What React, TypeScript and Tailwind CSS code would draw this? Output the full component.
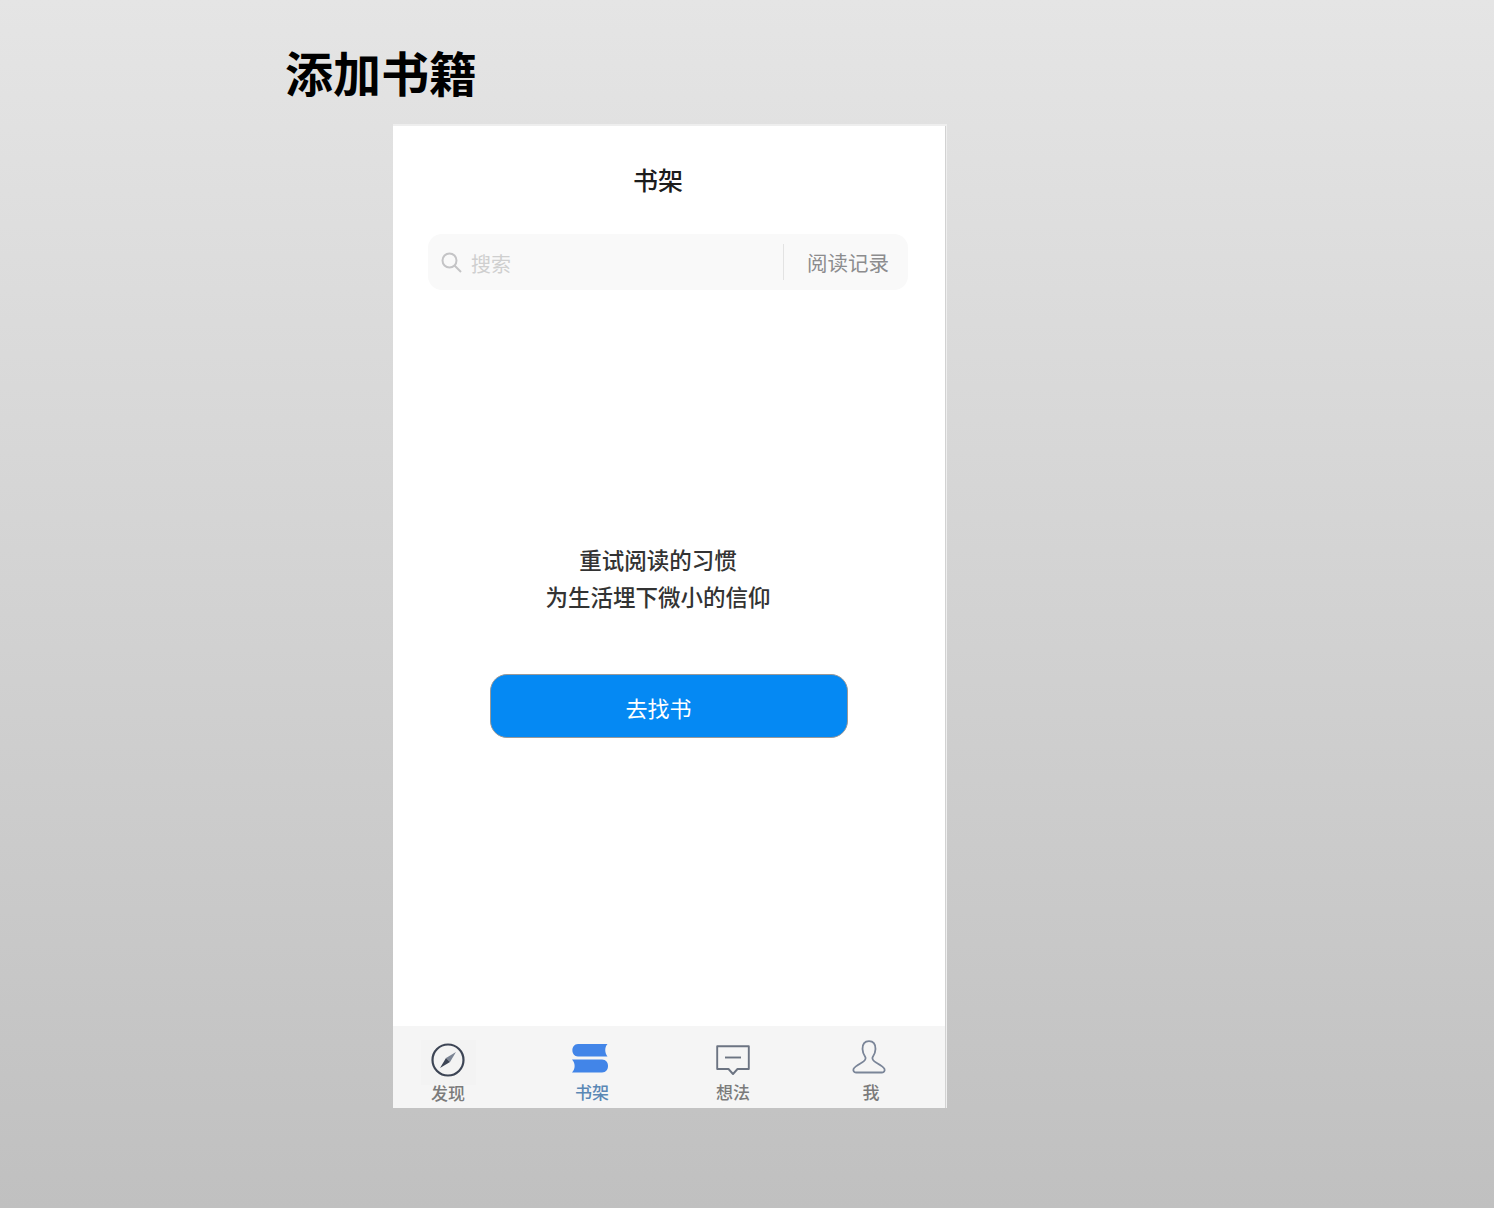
const cjk = "font-['Noto_Sans_CJK_SC','Noto_Sans',sans-serif]";

function CompassIcon() {
  return (
    <svg width="36" height="36" viewBox="0 0 36 36" fill="none">
      <circle cx="18" cy="18" r="15.5" stroke="#3d4555" strokeWidth="2.2" />
      <path d="M26 10 L20 20 L16 16 Z" fill="#7b8494" />
      <path d="M10 26 L16 16 L20 20 Z" fill="#3d4555" />
    </svg>
  );
}

function ShelfIcon() {
  return (
    <svg width="36" height="29" viewBox="0 0 36 29" fill="none">
      <path d="M6 0 H35.5 C32.5 3 32.5 9 35.5 12.5 H6 C-1.5 12.5 -1.5 0 6 0 Z" fill="#4285e8" />
      <path d="M0 15.5 H30 C38 15.5 38 28.5 30 28.5 H0 C3.5 25 3.5 19 0 15.5 Z" fill="#4285e8" />
    </svg>
  );
}

function CommentIcon() {
  return (
    <svg width="34" height="31" viewBox="0 0 34 31" fill="none">
      <path d="M1.2 1.2 H32.8 V24 H21.5 L17 29 L12.5 24 H1.2 Z" stroke="#6c7482" strokeWidth="1.9" strokeLinejoin="round" />
      <path d="M9 12.5 H25" stroke="#6c7482" strokeWidth="1.9" />
    </svg>
  );
}

function PersonIcon() {
  return (
    <svg width="34" height="34" viewBox="0 0 34 34" fill="none">
      <path
        d="M17 1.2 C12.5 1.2 10.5 4.5 10.5 9 C10.5 13 12.5 16 13.5 17.5 C14 19.5 12.5 21 10 22.5 C6.5 24.5 2.5 26.5 1.5 29 C1 31 2 32.5 4 32.5 H30 C32 32.5 33 31 32.5 29 C31.5 26.5 27.5 24.5 24 22.5 C21.5 21 20 19.5 20.5 17.5 C21.5 16 23.5 13 23.5 9 C23.5 4.5 21.5 1.2 17 1.2 Z"
        stroke="#7a8598"
        strokeWidth="1.8"
      />
    </svg>
  );
}

export default function App() {
  return (
    <div className={`w-[1494px] h-[1208px] overflow-hidden bg-gradient-to-b from-[#e5e5e5] to-[#c0c0c0] ${cjk}`}>
      <h1 className="pl-[285px] pt-[36px] h-[124px] text-[48px] leading-[70px] font-semibold text-black">添加书籍</h1>

      {/* Phone */}
      <div className="ml-[393px] w-[554px] h-[984px] bg-white border-t-2 border-r border-[#eeeeee]">
        <div className="h-full flex flex-col border-r border-[#d2d2d2]">
          <div className="pt-[33px] h-[108px] text-center text-[25px] leading-[40px] font-medium text-[#1c1c1c] pr-[22px]">书架</div>

          <div className="mx-[35px] w-[480px] h-[56px] flex items-center rounded-[14px] bg-[#f9f9f9]">
            <svg className="ml-[13px]" width="21" height="21" viewBox="0 0 21 21" fill="none">
              <circle cx="8.5" cy="8.5" r="7" stroke="#c4c4c6" strokeWidth="2" />
              <path d="M13.5 13.5 L20 20" stroke="#c4c4c6" strokeWidth="2" />
            </svg>
            <span className="ml-[9px] pt-[4px] text-[20px] text-[#cfcfcf]">搜索</span>
            <div className="ml-auto w-px h-[36px] bg-[#e3e3e3]"></div>
            <span className="ml-[23px] mr-[19px] text-[20.5px] text-[#8c8c8e]">阅读记录</span>
          </div>

          <div className="mt-[251px] pr-[22px] text-center text-[22.5px] leading-[37px] font-medium text-[#333333]">
            <p>重试阅读的习惯</p>
            <p>为生活埋下微小的信仰</p>
          </div>

          <button className="mt-[59px] ml-[97px] w-[358px] h-[64px] rounded-[17px] bg-[#0589f3] border border-[#999999] pt-[2px] pr-[21px] text-white text-[22px]">
            去找书
          </button>

          {/* Tab bar */}
          <div className="mt-auto h-[82px] bg-[#f5f5f5] flex">
            <div className="w-[110px] flex flex-col items-center pt-[14px]">
              <div className="w-[55px] h-[45px] pt-[2px] flex justify-center bg-[#f3f3f3]">
                <CompassIcon />
              </div>
              <span className="-mt-[4px] text-[17px] leading-[24px] font-medium text-[#7b7b7b]">发现</span>
            </div>
            <div className="ml-[52px] w-[70px] flex flex-col items-center pt-[18px]">
              <ShelfIcon />
              <span className="mt-[7px] ml-[4px] text-[17px] leading-[24px] font-medium text-[#5b88b5]">书架</span>
            </div>
            <div className="ml-[73px] w-[70px] flex flex-col items-center pt-[19px]">
              <CommentIcon />
              <span className="mt-[4px] text-[17px] leading-[24px] font-medium text-[#7b7b7b]">想法</span>
            </div>
            <div className="ml-[71px] w-[60px] flex flex-col items-center pt-[14px]">
              <PersonIcon />
              <span className="mt-[6px] ml-[4px] text-[17px] leading-[24px] font-medium text-[#7b7b7b]">我</span>
            </div>
          </div>
        </div>
      </div>
    </div>
  );
}
